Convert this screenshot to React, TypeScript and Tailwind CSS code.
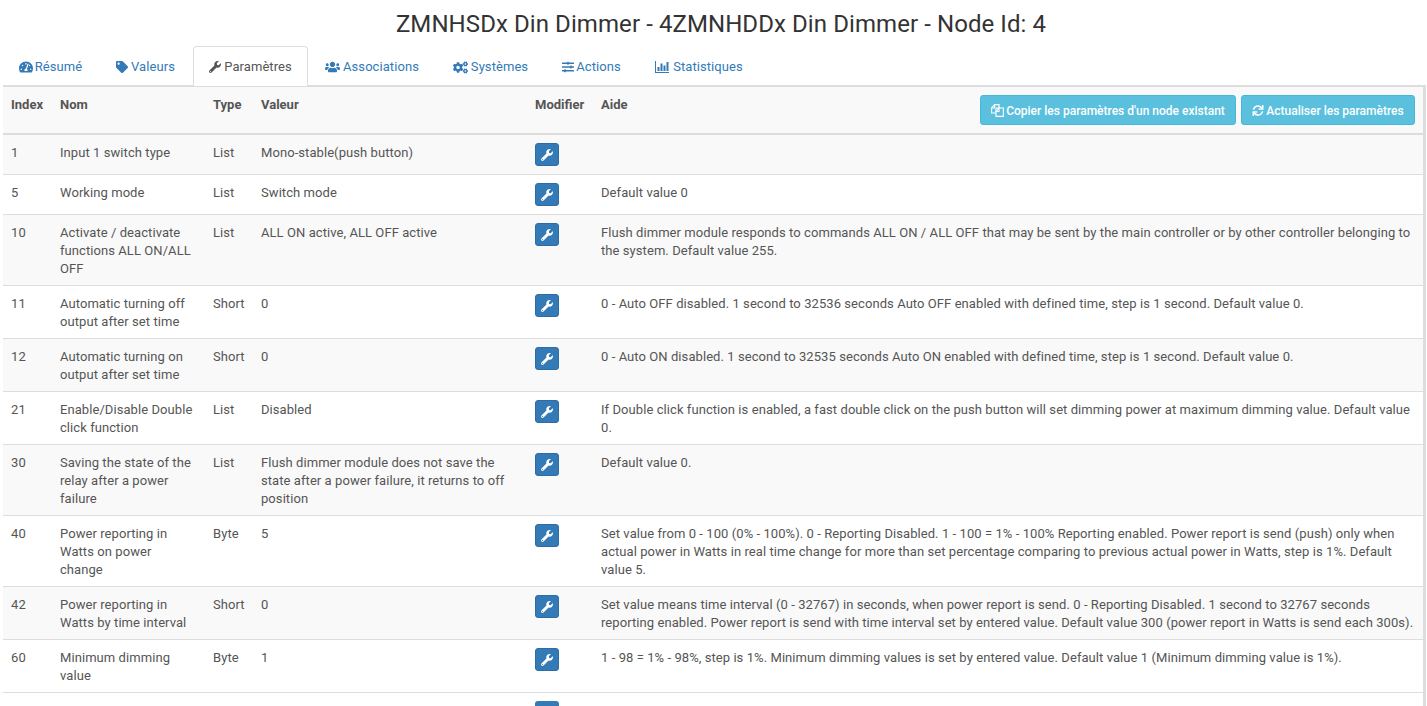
import React from "react";
import { FaTachometerAlt, FaTag, FaWrench, FaUsers, FaCogs, FaSlidersH, FaSync } from "react-icons/fa";

const BarChart = ({ className }: { className?: string }) => (
  <svg viewBox="0 0 14 12" className={className} fill="currentColor">
    <path d="M0 0h1v11h13v1H0z" />
    <rect x="2.5" y="6" width="2" height="4" />
    <rect x="5.5" y="2.5" width="2" height="7.5" />
    <rect x="8.5" y="4.5" width="2" height="5.5" />
    <rect x="11.5" y="1" width="2" height="9" />
  </svg>
);

const CopyIcon = ({ className }: { className?: string }) => (
  <svg viewBox="0 0 13 13" className={className} fill="none" stroke="currentColor" strokeWidth="1.1">
    <path d="M5 9H.6V4L3.6.6H8V4" />
    <path d="M.6 4H3.6V.6" />
    <path d="M5 4H12.4V12.4H5z" />
    <path d="M5 7.5L8 4.2V7.5z" />
  </svg>
);

const tabs = [
  { label: "Résumé", Icon: FaTachometerAlt, w: "w-[97px] pr-[2px]", ic: "h-[14px] w-[14px]", gap: "gap-[2px]" },
  { label: "Valeurs", Icon: FaTag, w: "w-[93px] pr-[2px]", ic: "h-[12px] w-[12px]", gap: "gap-[3px]" },
  { label: "Paramètres", Icon: FaWrench, w: "w-[115px]", ic: "h-[12px] w-[12px]", gap: "gap-[3px]", active: true },
  { label: "Associations", Icon: FaUsers, w: "w-[128px]", ic: "h-[14px] w-[15px]", gap: "gap-[3px]" },
  { label: "Systèmes", Icon: FaCogs, w: "w-[109px]", ic: "h-[13px] w-[15px]", gap: "gap-[3px]" },
  { label: "Actions", Icon: FaSlidersH, w: "w-[93px]", ic: "h-[12px] w-[12px]", gap: "gap-[2px]" },
  { label: "Statistiques", Icon: BarChart, w: "w-[122px]", ic: "h-[12px] w-[14px]", gap: "gap-[4px]" },
];

const rows = [
  ["1", "Input 1 switch type", "List", "Mono-stable(push button)", ""],
  ["5", "Working mode", "List", "Switch mode", "Default value 0"],
  ["10", "Activate / deactivate functions ALL ON/ALL OFF", "List", "ALL ON active, ALL OFF active", "Flush dimmer module responds to commands ALL ON / ALL OFF that may be sent by the main controller or by other controller belonging to the system. Default value 255."],
  ["11", "Automatic turning off output after set time", "Short", "0", "0 - Auto OFF disabled. 1 second to 32536 seconds Auto OFF enabled with defined time, step is 1 second. Default value 0."],
  ["12", "Automatic turning on output after set time", "Short", "0", "0 - Auto ON disabled. 1 second to 32535 seconds Auto ON enabled with defined time, step is 1 second. Default value 0."],
  ["21", "Enable/Disable Double click function", "List", "Disabled", "If Double click function is enabled, a fast double click on the push button will set dimming power at maximum dimming value. Default value 0."],
  ["30", "Saving the state of the relay after a power failure", "List", "Flush dimmer module does not save the state after a power failure, it returns to off position", "Default value 0."],
  ["40", "Power reporting in Watts on power change", "Byte", "5", "Set value from 0 - 100 (0% - 100%). 0 - Reporting Disabled. 1 - 100 = 1% - 100% Reporting enabled. Power report is send (push) only when actual power in Watts in real time change for more than set percentage comparing to previous actual power in Watts, step is 1%. Default value 5."],
  ["42", "Power reporting in Watts by time interval", "Short", "0", "Set value means time interval (0 - 32767) in seconds, when power report is send. 0 - Reporting Disabled. 1 second to 32767 seconds reporting enabled. Power report is send with time interval set by entered value. Default value 300 (power report in Watts is send each 300s)."],
  ["60", "Minimum dimming value", "Byte", "1", "1 - 98 = 1% - 98%, step is 1%. Minimum dimming values is set by entered value. Default value 1 (Minimum dimming value is 1%)."],
];

const td = "px-2 pt-[9px] pb-[7px] align-top";
const tdBtn = "px-2 pt-2 pb-2 align-top";
const th = "px-2 pt-[9px] pb-2 align-top text-left";

export default function App() {
  return (
    <div className="h-[706px] overflow-hidden bg-white font-['Roboto',sans-serif] text-[13px] leading-[18px] text-[#555] tracking-[0.07px]">
      <h1 className="h-[45px] pt-[7px] pl-[15px] text-center text-[24px] leading-[34px] font-normal tracking-[0.08px] text-[#333]">
        ZMNHSDx Din Dimmer - 4ZMNHDDx Din Dimmer - Node Id: 4
      </h1>
      <ul className="ml-[3px] flex h-[40px] items-start">
        {tabs.map(({ label, Icon, w, ic, gap, active }) => (
          <li
            key={label}
            className={
              w +
              " " +
              gap +
              " flex h-[40px] items-center justify-center rounded-t-[4px] " +
              (active
                ? "relative top-[1px] border border-b-0 border-[#ddd] bg-white pt-0 text-[#555]"
                : "pt-[4px] text-[#337ab7]")
            }
          >
            <Icon className={ic} />
            <span>{label}</span>
          </li>
        ))}
      </ul>
      <div className="ml-[3px] mr-[1px] border-t-[2px] border-r-[3px] border-[#ddd]">
        <table className="w-full table-fixed border-collapse">
          <colgroup>
            <col className="w-[49px]" />
            <col className="w-[153px]" />
            <col className="w-[48px]" />
            <col className="w-[274px]" />
            <col className="w-[66px]" />
            <col />
          </colgroup>
          <thead>
            <tr className="h-[47px] border-b-2 border-[#ddd] bg-[#f9f9f9] font-bold tracking-normal">
              <th className={th}>Index</th>
              <th className={th}>Nom</th>
              <th className={th}>Type</th>
              <th className={th}>Valeur</th>
              <th className={th}>Modifier</th>
              <th className={th}>
                <div className="flex items-start justify-between">
                  <span>Aide</span>
                  <div className="-mt-[1px] flex gap-[5px] text-[12px] font-medium text-white">
                    <button className="flex h-[30px] w-[256px] items-center justify-center gap-[2px] rounded-[3px] border border-[#46b8da] bg-[#5bc0de] pt-[1px]">
                      <CopyIcon className="-mt-[1px] h-[13px] w-[13px]" />
                      Copier les paramètres d'un node existant
                    </button>
                    <button className="flex h-[30px] w-[174px] items-center justify-center gap-[2px] rounded-[3px] border border-[#46b8da] bg-[#5bc0de] pt-[1px]">
                      <FaSync className="-mt-[1px] h-[11px] w-[12px]" />
                      Actualiser les paramètres
                    </button>
                  </div>
                </div>
              </th>
            </tr>
          </thead>
          <tbody>
            {rows.map((r, i) => (
              <tr key={r[0]} className={"border-b border-[#ddd] " + (i % 2 === 0 ? "bg-[#f9f9f9]" : "bg-white")}>
                <td className={td}>{r[0]}</td>
                <td className={td}>{r[1]}</td>
                <td className={td}>{r[2]}</td>
                <td className={td}>{r[3]}</td>
                <td className={tdBtn}>
                  <button className="flex h-[23px] w-[24px] items-center justify-center rounded-[3px] border border-[#2e6da4] bg-[#337ab7] text-white">
                    <FaWrench className="h-[12px] w-[12px]" />
                  </button>
                </td>
                <td className={td}>{r[4]}</td>
              </tr>
            ))}
            <tr>
              <td className={td} colSpan={4}></td>
              <td className={tdBtn}>
                <div className="h-[23px] w-[24px] rounded-[3px] bg-[#337ab7]" />
              </td>
              <td className={td}></td>
            </tr>
          </tbody>
        </table>
      </div>
    </div>
  );
}
